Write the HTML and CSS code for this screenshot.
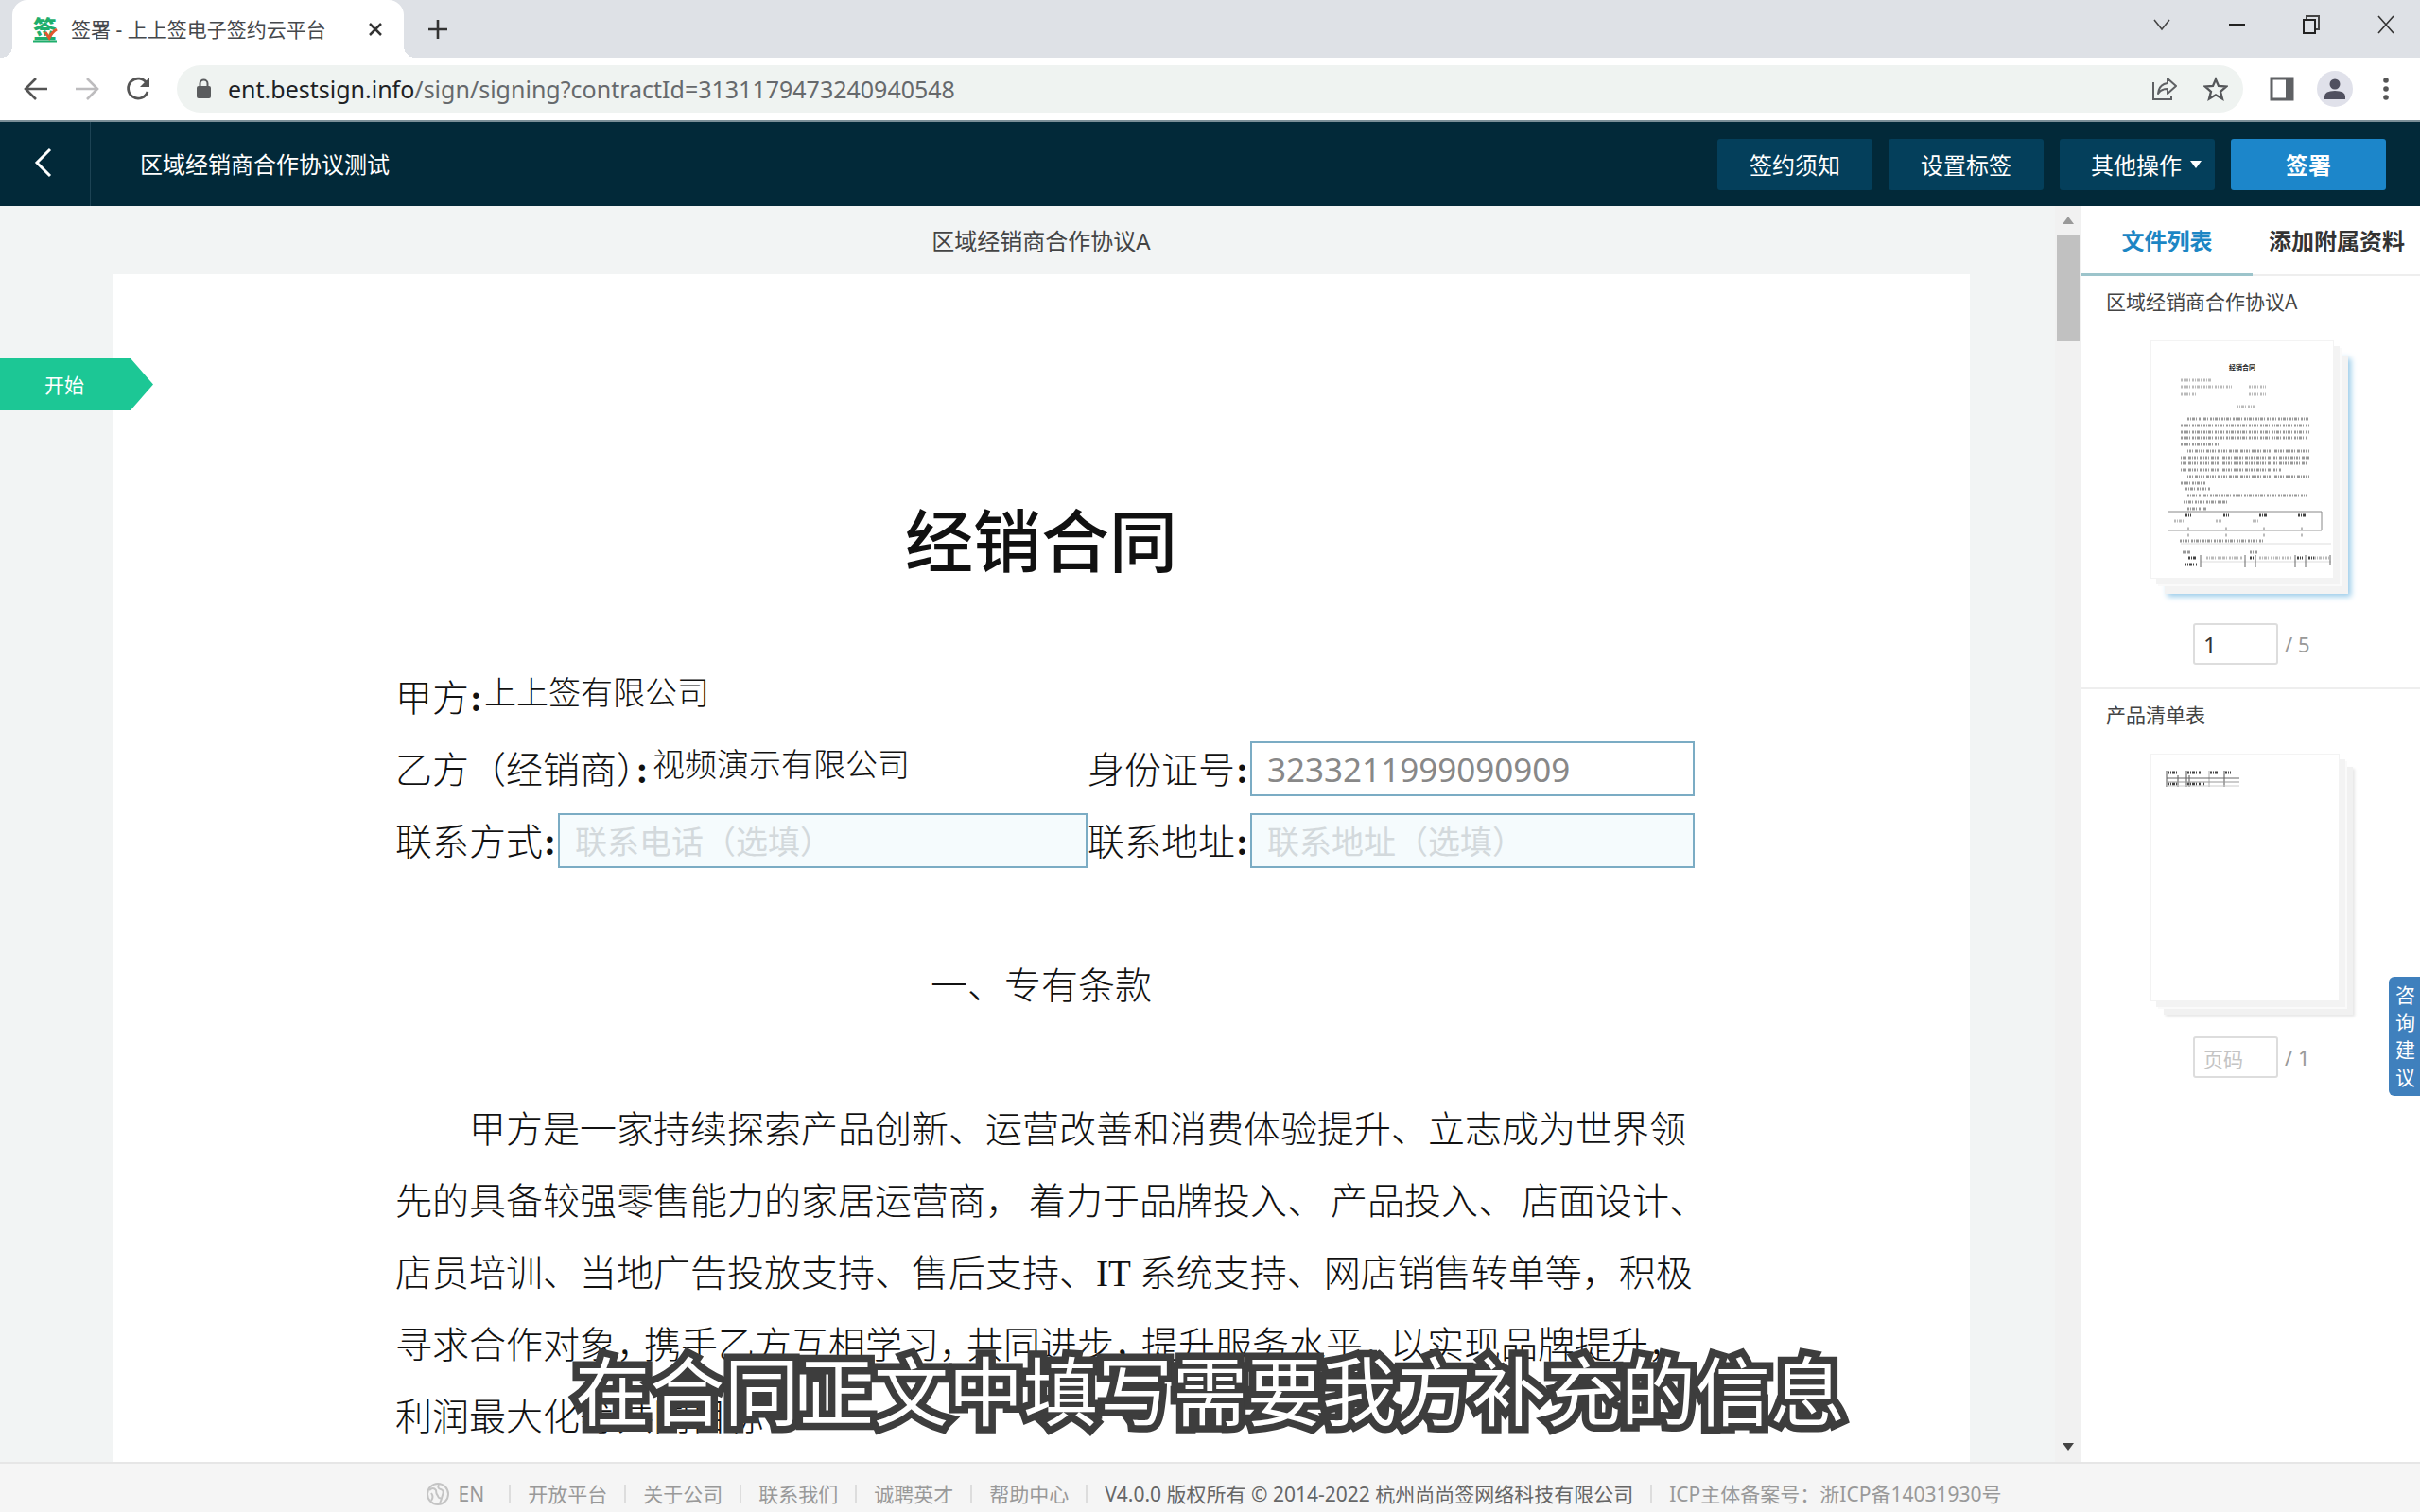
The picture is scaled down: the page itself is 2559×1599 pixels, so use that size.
FILE: index.html
```html
<!DOCTYPE html>
<html lang="zh-CN">
<head>
<meta charset="utf-8">
<title>签署 - 上上签电子签约云平台</title>
<link rel="stylesheet" href="styles.css">
</head>
<body>
<div class="window">
  <div class="tabstrip">
    <div class="tab">
      <svg class="favicon" viewBox="0 0 28 28"><text x="1" y="23" class="favicon-mark">签</text><path d="M1 26.500h25" stroke="#1fae6c" stroke-width="2"/><path d="M14 17l4 6q3-6 8-9" fill="none" stroke="#e2572f" stroke-width="3"/></svg>
      <span class="tab-title">签署 - 上上签电子签约云平台</span>
      <button class="plain" aria-label="关闭标签页"><svg width="18" height="18" viewBox="0 0 18 18"><path d="M3 3l12 12M15 3L3 15" stroke="#333" stroke-width="2.500"/></svg></button>
    </div>
    <button class="plain new-tab" aria-label="新标签页"><svg width="24" height="24" viewBox="0 0 24 24"><path d="M12 2v20M2 12h20" stroke="#333" stroke-width="2.600"/></svg></button>
    <div class="window-controls">
      <button class="plain" aria-label="搜索标签页"><svg width="24" height="24" viewBox="0 0 24 24"><path d="M4 7l8 10 8-10" fill="none" stroke="#444" stroke-width="1.600"/></svg></button>
      <button class="plain" aria-label="最小化"><svg width="24" height="24" viewBox="0 0 24 24"><path d="M4 12h17" stroke="#222" stroke-width="2"/></svg></button>
      <button class="plain" aria-label="还原"><svg width="24" height="24" viewBox="0 0 24 24"><path d="M7 6V3h13v14h-4" fill="none" stroke="#444" stroke-width="2"/><path d="M4 7h12v14H4z" fill="none" stroke="#222" stroke-width="2"/></svg></button>
      <button class="plain" aria-label="关闭"><svg width="24" height="24" viewBox="0 0 24 24"><path d="M4 3l16 18M20 3L4 21" stroke="#333" stroke-width="1.600"/></svg></button>
    </div>
  </div>

  <div class="toolbar">
    <button class="plain" aria-label="后退"><svg width="26" height="26" viewBox="0 0 26 26"><path d="M25 13H3M13 2L2 13l11 11" fill="none" stroke="#555" stroke-width="2.600"/></svg></button>
    <button class="plain" aria-label="前进"><svg width="26" height="26" viewBox="0 0 26 26"><path d="M1 13h22M13 2l11 11-11 11" fill="none" stroke="#bdbcbe" stroke-width="2.600"/></svg></button>
    <button class="plain" aria-label="重新加载"><svg width="26" height="26" viewBox="0 0 26 26"><path d="M22 7A10.500 10.500 0 1 0 23 16" fill="none" stroke="#555" stroke-width="2.800"/><path d="M25 1v10H15z" fill="#555"/></svg></button>
    <div class="omnibox">
      <svg width="18" height="24" viewBox="0 0 18 24"><rect x="1" y="9" width="15" height="13" rx="2" fill="#5a5c5e"/><path d="M4.500 10V6.500a4 4 0 0 1 8 0V10" fill="none" stroke="#5a5c5e" stroke-width="2"/></svg>
      <span class="url"><b>ent.bestsign.info</b>/sign/signing?contractId=3131179473240940548</span>
      <button class="plain" aria-label="分享"><svg width="28" height="28" viewBox="0 0 28 28"><path d="M2 7v18h19v-4" fill="none" stroke="#5f6164" stroke-width="2"/><path d="M17 3l9 8-9 8v-5q-7 0-10 5 1-10 10-11z" fill="none" stroke="#5f6164" stroke-width="2" stroke-linejoin="round"/></svg></button>
      <button class="plain" aria-label="收藏"><svg width="26" height="26" viewBox="0 0 26 26"><path d="M13 3l3 7 8 .6-6 5.200 2 7.700-7-4.200-7 4.200 2-7.700-6-5.200 8-.6z" fill="none" stroke="#55575a" stroke-width="2.300"/></svg></button>
    </div>
    <div class="toolbar-end">
      <button class="plain" aria-label="侧边栏"><svg width="26" height="26" viewBox="0 0 26 26"><path d="M2 2h22v22H2z" fill="none" stroke="#5f6164" stroke-width="3"/><path d="M17 1h8v24h-8z" fill="#5f6164"/></svg></button>
      <button class="plain" aria-label="用户"><svg width="38" height="38" viewBox="0 0 38 38"><circle cx="19" cy="19" r="19" fill="#e0e1ea"/><circle cx="19" cy="14" r="5.500" fill="#50505f"/><path d="M8 30v-3q0-6 11-6t11 6v3z" fill="#50505f"/></svg></button>
      <button class="plain more" aria-label="更多"><svg width="6" height="26" viewBox="0 0 6 26"><circle cx="3" cy="4" r="2.800" fill="#555"/><circle cx="3" cy="13" r="2.800" fill="#555"/><circle cx="3" cy="22" r="2.800" fill="#555"/></svg></button>
    </div>
  </div>

  <header class="app-header">
    <button class="plain back" aria-label="返回"><svg width="20" height="32" viewBox="0 0 20 32"><path d="M17 2L3 16l14 14" fill="none" stroke="#fff" stroke-width="3"/></svg></button>
    <h1 class="contract-name">区域经销商合作协议测试</h1>
    <button class="action">签约须知</button>
    <button class="action">设置标签</button>
    <button class="action menu">其他操作<i class="caret"></i></button>
    <button class="action primary">签署</button>
  </header>

  <div class="workspace">
    <main class="viewer">
      <div class="document">
        <div class="document-name">区域经销商合作协议A</div>
        <article class="paper">
          <h2 class="paper-title">经销合同</h2>
          <div class="party-line"><span>甲方<b>:</b></span><span class="party-value">上上签有限公司</span></div>
          <div class="party-grid">
            <div class="party-line"><span class="wide-label">乙方（经销商<span class="half">）</span><b>:</b></span><span class="party-value">视频演示有限公司</span></div>
            <div class="party-line"><label for="id-no">身份证号<b>:</b></label><input id="id-no" class="field filled" value="3233211999090909"></div>
            <div class="party-line"><label for="phone">联系方式<b>:</b></label><input id="phone" class="field" placeholder="联系电话（选填）"></div>
            <div class="party-line"><label for="address">联系地址<b>:</b></label><input id="address" class="field" placeholder="联系地址（选填）"></div>
          </div>
          <h3 class="section-title">一、专有条款</h3>
          <p class="clause">甲方是一家持续探索产品创新、运营改善和消费体验提升、立志成为世界领<br>先的具备较强零售能力的家居运营商<span class="pause">，</span>着力于品牌投入<span class="pause">、</span>产品投入<span class="pause">、</span>店面设计、<br>店员培训、当地广告投放支持、售后支持、IT 系统支持、网店销售转单等，积极<br>寻求合作对象<span class="comma">，</span>携手乙方互相学习<span class="comma">，</span>共同进步<span class="comma">，</span>提升服务水平<span class="comma">，</span>以实现品牌提升<span class="comma">，</span><br>利润最大化等共同目标</p>
        </article>
      </div>
      <div class="scrollbar"><i class="arrow up"></i><i class="thumb"></i><i class="arrow down"></i></div>
      <button class="start">开始</button>
    </main>

    <aside class="sidebar">
      <nav class="side-tabs"><button class="side-tab active">文件列表</button><button class="side-tab">添加附属资料</button></nav>
      <section class="file">
        <h4 class="file-name">区域经销商合作协议A</h4>
        <div class="stack selected">
          <svg class="sheet" viewBox="0 0 192 250">
            <text x="96" y="30" text-anchor="middle" class="mini-title">经销合同</text>
            <g class="rows light"><path d="M31 41h32M31 48h54M103 48h18M31 56h16M103 56h18M90 69h20"/></g>
            <g class="rows"><path d="M38 82h129M31 89h136M31 96h136M31 102h134M31 109h40"/></g>
            <g class="rows shifted"><path d="M38 116h129M31 123h136M31 129h134M31 136h106M38 143h129"/></g>
            <g class="rows"><path d="M31 150h26M36 156h26M38 163h126M34 170h48M38 177h20M30 211h88M33 223h8M104 223h8"/></g>
            <g class="rows heavy"><path d="M36 184h6M76 184h6M114 184h9M155 184h8M39 229h8M35 236h13M104 229h4M154 229h6M166 229h6"/></g>
            <g class="rows light"><path d="M24 190h11M68 190h6M107 190h6M38 198h3M78 198h3M118 198h3M158 198h3M38 205h3M78 205h3M118 205h3M158 205h3M58 229h38M114 229h34M172 229h16"/></g>
            <path d="M18 180h162v20" fill="none" stroke="#888"/><path d="M18 200h162" stroke="#999"/><path d="M31 214h159M52 233h138" stroke="#ddd"/>
            <path d="M52 226v13M99 226v13M110 226v13M152 226v13M163 226v13M189 226v10" stroke="#666"/>
          </svg>
        </div>
        <div class="pager"><input class="page-input" aria-label="页码" value="1"><span>/ 5</span></div>
      </section>
      <section class="file">
        <h4 class="file-name">产品清单表</h4>
        <div class="stack">
          <svg class="sheet" viewBox="0 0 192 250">
            <g class="rows heavy"><path d="M17 19h10M38 19h15M62 19h8M78 19h6M17 31h12M38 31h18"/></g>
            <path d="M16 17v17M28 22v12M37 17v17M40 22v12M77 17v17" stroke="#555"/><path d="M61 17v17" stroke="#aaa"/>
            <path d="M16 25h77" stroke="#666"/><path d="M16 29h77" stroke="#999"/><path d="M16 33h77" stroke="#ccc"/>
          </svg>
        </div>
        <div class="pager"><input class="page-input" aria-label="页码" placeholder="页码"><span>/ 1</span></div>
      </section>
    </aside>
  </div>

  <footer class="footer">
    <a href="#" class="lang"><svg width="24" height="26" viewBox="0 0 24 26"><circle cx="12" cy="13" r="11" fill="none" stroke="#c4c4c4" stroke-width="2"/><path d="M3 9q4-4 7 0 0 4 2 6 1 3 3 2M13 3q-2 4 2 5 4 1 2 6-1 4-3 9M5 20q3-4 0-8" fill="none" stroke="#c4c4c4" stroke-width="2"/></svg>EN</a>
    <a href="#">开放平台</a>
    <a href="#">关于公司</a>
    <a href="#">联系我们</a>
    <a href="#">诚聘英才</a>
    <a href="#">帮助中心</a>
    <span class="copyright">V4.0.0 版权所有 © 2014-2022 杭州尚尚签网络科技有限公司</span>
    <a href="#">ICP主体备案号：浙ICP备14031930号</a>
  </footer>

  <button class="feedback">咨询建议</button>
  <div class="caption">在合同正文中填写需要我方补充的信息</div>
</div>
</body>
</html>
```

FILE: styles.css
```css
* { box-sizing: border-box; }
body, h1, h2, h3, h4, p { margin: 0; }
body { font-family: "Noto Sans", "Noto Sans CJK SC", sans-serif; color: #333; }
button, input { font-family: inherit; }
a { color: inherit; text-decoration: none; }
svg { display: block; flex: none; }

.window { position: relative; display: flex; flex-direction: column; height: 100vh; overflow: hidden; background: #fff; }
.plain { display: flex; align-items: center; justify-content: center; padding: 0; border: 0; background: none; }

/* browser frame */
.tabstrip { display: flex; align-items: center; height: 61px; padding-left: 13px; background: #dee1e6; }
.tab { position: relative; display: flex; align-items: center; width: 414px; height: 61px; padding: 0 21px; border-radius: 16px 16px 0 0; background: #fff; }
.tab::before, .tab::after { content: ""; position: absolute; bottom: 0; width: 12px; height: 12px; }
.tab::before { right: 100%; background: radial-gradient(circle at 0 0, transparent 12px, #fff 12px); }
.tab::after { left: 100%; background: radial-gradient(circle at 100% 0, transparent 12px, #fff 12px); }
.favicon { width: 28px; height: 28px; margin-right: 13px; overflow: visible; }
.favicon-mark { font: 900 25px "Noto Sans CJK SC", sans-serif; fill: #1fae6c; }
.tab-title { flex: 1; font-size: 21px; line-height: 30px; color: #45484c; white-space: nowrap; }
.new-tab { margin-left: 24px; }
.window-controls { display: flex; gap: 55px; margin: 0 24px 10px auto; }
.toolbar { display: flex; align-items: center; gap: 28px; height: 68px; padding: 0 33px 0 25px; border-bottom: 2px solid #7b8f98; }
.omnibox { display: flex; flex: 1; align-items: center; height: 50px; padding: 0 16px 0 20px; border-radius: 25px; background: #eff3f1; }
.url { flex: 1; margin-left: 16px; font-size: 25px; line-height: 32px; color: #66696c; }
.url b { font-weight: 400; color: #202124; }
.omnibox .plain { margin-left: 27px; }
.toolbar-end { display: flex; align-items: center; gap: 24px; }
.toolbar-end .more { margin-left: 8px; }

/* application bar */
.app-header { display: flex; flex: none; align-items: center; gap: 17px; height: 89px; padding-right: 36px; background: #022939; }
.back { width: 96px; height: 89px; padding: 0 4px 3px 0; border-right: 1px solid #1d4354; }
.contract-name { flex: 1; padding-left: 35px; font-size: 24px; font-weight: 400; line-height: 36px; color: #fff; }
.action { display: flex; align-items: center; justify-content: center; gap: 9px; width: 164px; height: 54px; padding: 0; border: 0; border-radius: 3px; background: #043f5b; color: #fff; font-size: 24px; white-space: nowrap; }
.action.menu { padding-left: 19px; }
.action.primary { background: #1c86ca; font-weight: 700; }
.caret { border: 6px solid transparent; border-top: 8px solid #fff; border-bottom: 0; }

/* document viewer */
.workspace { display: flex; flex: 1; min-height: 0; }
.viewer { position: relative; display: flex; flex: 1; min-width: 0; background: #f2f4f4; }
.document { display: flex; flex: 1; flex-direction: column; overflow: hidden; padding: 0 90px 0 119px; }
.document-name { height: 72px; flex: none; font-size: 24px; line-height: 74px; text-align: center; color: #444; }
.paper { display: flex; flex: none; flex-direction: column; align-items: center; padding: 231px 0 80px; background: #fff; color: #111; font-family: "Liberation Serif", "Noto Sans CJK SC", serif; font-size: 39px; font-weight: 300; line-height: 76px; white-space: nowrap; }
.paper > * { width: 1366px; }
.paper-title { margin-bottom: 72px; font-size: 72px; font-weight: 500; line-height: 108px; text-align: center; }
.party-line { display: flex; align-items: center; height: 76px; }
.party-line b { padding: 0 2px 0 1px; font-weight: 700; }
.party-value { padding-bottom: 10px; font-size: 34px; }
.party-grid { display: grid; grid-template-columns: 732px 642px; }
.wide-label { width: 272px; }
.half { font-feature-settings: "halt"; }
.field { flex: 1; min-width: 0; height: 58px; margin-bottom: 4px; padding: 0 16px; border: 2px solid #7bacc4; border-radius: 0; background: #f5fbfd; color: #888; font-family: "Noto Sans", "Noto Sans CJK SC", sans-serif; font-size: 35px; }
.field.filled { background: #fff; }
.field::placeholder { color: #d3d9dc; font-size: 34px; opacity: 1; }
.section-title { margin: 76px 0; font-size: 39px; font-weight: 300; text-align: center; }
.clause { text-indent: 78px; }
.comma, .pause { display: inline-block; text-indent: 0; }
.comma { width: 29px; }
.pause { width: 46px; }
.scrollbar { display: flex; flex-direction: column; align-items: center; width: 28px; background: #f1f1f1; border-right: 1px solid #e2e2e2; }
.arrow { border: 6px solid transparent; }
.arrow.up { margin: 5px 0 11px; border-bottom: 8px solid #999; }
.arrow.down { margin: auto 0 6px; border-top: 8px solid #444; }
.thumb { width: 24px; height: 113px; background: #c1c1c1; }
.start { position: absolute; top: 161px; left: 0; width: 162px; height: 55px; padding: 0 26px 2px 0; border: 0; background: #1cc795; clip-path: polygon(0 0, 138px 0, 100% 50%, 138px 100%, 0 100%); color: #fff; font-size: 21px; }

/* file list */
.sidebar { flex: none; width: 358px; background: #fff; }
.side-tabs { display: flex; height: 74px; border-bottom: 2px solid #eee; }
.side-tab { height: 74px; padding: 0 15px 3px 17px; border: 0; background: none; color: #333; font-size: 24px; font-weight: 700; white-space: nowrap; }
.side-tab.active { width: 181px; padding: 0; border-bottom: 3px solid #9cc4cb; color: #1c86c4; }
.file { display: flex; flex-direction: column; height: 437px; padding: 11px 0 24px 26px; border-bottom: 2px solid #eee; }
.file:last-child { border-color: transparent; }
.file-name { font-size: 21px; font-weight: 400; line-height: 32px; color: #444; }
.stack { width: 200px; height: 262px; margin: 25px 0 0 47px; border: 1px solid #f3f3f3; background: #fff; box-shadow: 6px 6px 0 #f3f3f3, 8px 8px 0 #fafafa, 14px 14px 0 #f1f1f1, 16px 16px 3px #e6e6e6; }
.stack.selected { width: 194px; height: 252px; box-shadow: 6px 6px 0 #f3f3f3, 8px 8px 0 #fafafa, 15px 16px 0 #f3f3f3, 18px 19px 6px #9accea; }
.sheet { width: 192px; height: 250px; }
.mini-title { font: 700 7px "Noto Sans CJK SC", sans-serif; fill: #222; }
.rows { fill: none; stroke: #999; stroke-width: 3; stroke-dasharray: 2 1 1 1 3 1 1 2; }
.rows.shifted { stroke-dasharray: 1 1 2 1 1 2 3 1; }
.rows.light { stroke: #bbb; }
.rows.heavy { stroke: #444; }
.pager { display: flex; align-items: center; gap: 7px; margin: auto 0 0 92px; font-size: 22px; color: #999; }
.page-input { width: 90px; height: 44px; padding: 0 9px; border: 2px solid #ddd; border-radius: 3px; color: #333; font-size: 24px; }
.page-input::placeholder { color: #c4c4c4; font-size: 21px; opacity: 1; }

.footer { display: flex; flex: none; align-items: center; justify-content: center; height: 53px; padding: 12px 0 0 8px; border-top: 2px solid #e6e6e6; background: #f5f5f5; font-size: 21px; line-height: 30px; color: #999; white-space: nowrap; }
.footer > * + * { display: flex; align-items: center; }
.footer > * + *::before { content: ""; width: 2px; height: 20px; margin: 0 18px; background: #ddd; }
.lang { display: flex; align-items: center; gap: 10px; margin-right: 8px; }
.copyright { color: #666; }

.feedback { position: absolute; right: 0; top: 1033px; width: 33px; height: 126px; padding: 0 5px 0 7px; border: 0; border-radius: 6px 0 0 6px; background: #3f80bd; color: #fff; font-size: 21px; line-height: 29px; white-space: normal; word-break: break-all; }
.caption { position: absolute; bottom: 73px; left: 0; right: 0; font-family: "Noto Sans CJK SC", sans-serif; font-size: 79px; font-weight: 400; line-height: 116px; text-align: center; color: #fff; -webkit-text-stroke: 15px #3d3d3d; paint-order: stroke fill; pointer-events: none; }
```
